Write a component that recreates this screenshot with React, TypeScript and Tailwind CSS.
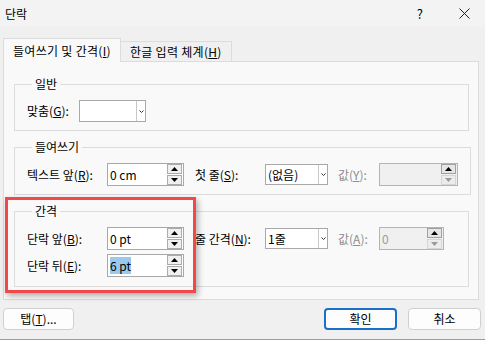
import React from 'react'

const font = { fontFamily: '"Noto Sans CJK KR", "Noto Sans", sans-serif' }

// little up / down triangle for the spin buttons
function Tri({ up, color }: { up?: boolean; color: string }) {
  return (
    <svg width="7" height="4" viewBox="0 0 7 4">
      <polygon points={up ? '0,4 7,4 3.5,0' : '0,0 7,0 3.5,4'} fill={color} />
    </svg>
  )
}

function Spin({ value, width, disabled, selected }: { value: string; width: string; disabled?: boolean; selected?: boolean }) {
  return (
    <div
      className={`${width} h-[23px] border flex items-center ${
        disabled ? 'bg-[#f0f0f0] border-[#b4b4b4]' : 'bg-white border-[#a8a8a8]'
      }`}
    >
      <span className={`pl-[2px] text-[12px] leading-4 ${disabled ? 'text-[#9a9a9a]' : 'text-black'}`}>
        <span className={selected ? 'bg-[#99c9ef]' : ''}>{value}</span>
      </span>
      <div className="ml-auto flex flex-col gap-px pr-px">
        <div
          className={`w-[15px] h-[10px] border flex items-center justify-center ${
            disabled ? 'border-[#a0a0a0] bg-[#e6e6e6]' : 'border-[#ababab] bg-[#f0f0f0]'
          }`}
        >
          <Tri up color="#000" />
        </div>
        <div
          className={`w-[15px] h-[10px] border flex items-center justify-center ${
            disabled ? 'border-[#d6d6d6] bg-[#ececec]' : 'border-[#ababab] bg-[#f0f0f0]'
          }`}
        >
          <Tri color={disabled ? '#9a9a9a' : '#000'} />
        </div>
      </div>
    </div>
  )
}

function Select({ value, width, height }: { value: string; width: string; height: string }) {
  return (
    <div className={`${width} ${height} bg-white border border-[#a8a8a8] flex items-stretch`}>
      <span className="flex-1 pl-[2px] text-[12px] leading-4 flex items-center text-black">{value}</span>
      <div className="w-[9px] border-l border-[#c8c8c8] flex items-center justify-center">
        <svg width="5" height="3" viewBox="0 0 5 3">
          <polyline points="0.5,0.5 2.5,2.5 4.5,0.5" fill="none" stroke="#333" strokeWidth="1" />
        </svg>
      </div>
    </div>
  )
}

function Label({ text, k, rest = '):', width, dim }: { text: string; k: string; rest?: string; width: string; dim?: boolean }) {
  return (
    <span className={`${width} shrink-0 text-[12px] leading-4 ${dim ? 'text-[#8c8c8c]' : 'text-black'}`}>
      {text}(<u>{k}</u>{rest}
    </span>
  )
}

function Group({ title, children }: { title: string; children: React.ReactNode }) {
  return (
    <fieldset className="border border-[#dcdcdc] px-[12px] pt-[8px] pb-[8px]">
      <legend className="ml-[5px] px-[3px] text-[12px] leading-4 text-black">{title}</legend>
      {children}
    </fieldset>
  )
}

export default function App() {
  return (
    <div className="w-[485px] h-[340px] bg-[#f0f0f0] flex flex-col overflow-hidden border-b border-[#9c9c9c]" style={font}>
      {/* title bar */}
      <div className="h-[27px] bg-[#f3f3f3] flex items-center pl-[5px] shrink-0">
        <span className="text-[12px] leading-4 text-black">단락</span>
        <span className="ml-auto text-[13px] leading-4 text-black mr-[36px]">?</span>
        <svg width="11" height="11" viewBox="0 0 11 11" className="mr-[15px]">
          <path d="M0.5 0.5 L10.5 10.5 M10.5 0.5 L0.5 10.5" stroke="#222" strokeWidth="1" />
        </svg>
      </div>

      {/* tabs */}
      <div className="flex items-end pl-[3px] mt-[11px] shrink-0">
        <div className="h-[24px] px-[9px] border border-b-0 border-[#dcdcdc] bg-[#f9f9f9] flex items-center relative z-10 -mb-px">
          <span className="text-[12px] leading-4 text-black tracking-[0.3px]">
            들여쓰기 및 간격(<u>I</u>)
          </span>
        </div>
        <div className="h-[20px] px-[9px] border border-b-0 border-l-0 border-[#dcdcdc] bg-[#f0f0f0] flex items-center">
          <span className="text-[12px] leading-4 text-black tracking-[0.3px]">
            한글 입력 체계(<u>H</u>)
          </span>
        </div>
      </div>

      {/* tab panel */}
      <div className="relative mx-[3px] w-[476px] h-[239px] border border-[#dcdcdc] bg-[#f9f9f9] pl-[10px] pr-[9px] pt-[14px] flex flex-col gap-[8px] shrink-0">
        <Group title="일반">
          <div className="flex items-center">
            <Label text="맞춤" k="G" width="w-[52px]" />
            <Select value="" width="w-[67px]" height="h-[22px]" />
          </div>
        </Group>

        <Group title="들여쓰기">
          <div className="flex items-center">
            <Label text="텍스트 앞" k="R" width="w-[80px]" />
            <Spin value="0 cm" width="w-[77px]" />
            <Label text="첫 줄" k="S" width="w-[70px] ml-[11px]" />
            <Select value="(없음)" width="w-[63px]" height="h-[21px]" />
            <Label text="값" k="Y" width="w-[41px] ml-[10px]" dim />
            <Spin value="" width="w-[79px]" disabled />
          </div>
        </Group>

        <Group title="간격">
          <div className="flex flex-col gap-[4px] pb-px">
            <div className="flex items-center">
              <Label text="단락 앞" k="B" width="w-[80px]" />
              <Spin value="0 pt" width="w-[77px]" />
              <Label text="줄 간격" k="N" width="w-[70px] ml-[11px]" />
              <Select value="1줄" width="w-[63px]" height="h-[21px]" />
              <Label text="값" k="A" width="w-[41px] ml-[10px]" dim />
              <Spin value="0" width="w-[65px]" disabled />
            </div>
            <div className="flex items-center">
              <Label text="단락 뒤" k="E" width="w-[80px]" />
              <Spin value="6 pt" width="w-[77px]" selected />
            </div>
          </div>
        </Group>

        {/* red highlight drawn over the 간격 group */}
        <div className="absolute left-[1px] top-[135px] w-[191px] h-[96px] border-[3px] border-[#f44848] shadow-[2px_3px_6px_rgba(0,0,0,0.3)] pointer-events-none" />
      </div>

      {/* buttons */}
      <div className="flex items-center px-[3px] mt-[8px] shrink-0">
        <button className="w-[71px] h-[22px] rounded-[4px] border border-[#d0d0d0] bg-[#fdfdfd] text-[12px] leading-4 text-black">
          탭(<u>T</u>)...
        </button>
        <button className="ml-auto w-[73px] h-[22px] rounded-[4px] border-2 border-[#1a6fc9] bg-[#fdfdfd] text-[12px] leading-4 text-black">
          확인
        </button>
        <button className="ml-[11px] mr-[1px] w-[73px] h-[22px] rounded-[4px] border border-[#d0d0d0] bg-[#fdfdfd] text-[12px] leading-4 text-black">
          취소
        </button>
      </div>
    </div>
  )
}
